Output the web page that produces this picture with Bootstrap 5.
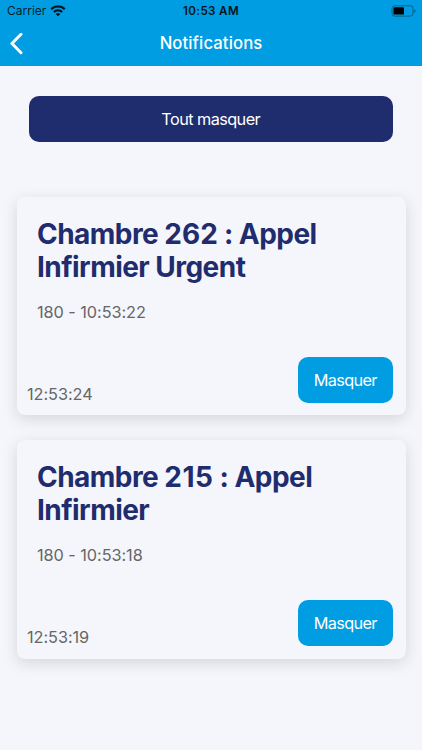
<!DOCTYPE html>
<html lang="fr">
<head>
<meta charset="utf-8">
<meta name="viewport" content="width=device-width, initial-scale=1">
<title>Notifications</title>
<link href="https://cdn.jsdelivr.net/npm/bootstrap@5.3.0/dist/css/bootstrap.min.css" rel="stylesheet">
<style>
body{font-family:Inter,"Liberation Sans",sans-serif;background:#f4f6fb;color:#666;min-height:750px;overflow:hidden}
.app-head{background:#009de2;height:65.5px}
.status{height:22px;font-size:12px;line-height:22px;color:#06202d;padding:0 6px 0 7px}
.status .clock{color:#03131c;font-size:11.6px;letter-spacing:.37px}
.title-bar{height:43px;padding:0 10px}
.title-bar h1{font-size:16.7px;line-height:43px;letter-spacing:.1px}
.hide-all{height:45.5px;margin:30.5px 29px 55px 28.5px;background:#1f2c6d;border-radius:10px;font-size:16.3px;letter-spacing:-.58px}
.notes{padding:0 16.5px;gap:24.5px}
.note{height:218.8px;background:#f4f6fb;border-radius:8px;box-shadow:0 4px 15px rgba(40,35,45,.15);padding:21px 12.5px 12.7px 10.5px}
.note h2{font-size:28px;line-height:33.5px;color:#1f2c6d;letter-spacing:-.54px;padding-left:10px}
.note h2 .room{letter-spacing:0}
.note h2 .room-narrow{letter-spacing:.5px}
.note p{font-size:16.3px;line-height:22px;letter-spacing:-.06px;padding-left:10px;margin-top:16px}
.note time{font-size:16.3px;line-height:18px;letter-spacing:-.06px}
.hide-one{width:95.5px;height:45.6px;background:#009de2;border-radius:10px;font-size:16.3px;letter-spacing:-.7px}
</style>
</head>
<body>
<header class="app-head">
  <div class="status d-flex justify-content-between align-items-center position-relative">
    <div class="d-flex align-items-center gap-1">
      <span>Carrier</span>
      <svg width="16" height="12" viewBox="0 0 16 12" fill="none" stroke="#03131c" stroke-width="2.3"><path d="M1.2 4.1C5 .5 11 .5 14.8 4.1M3.9 7c2.3-2.2 5.9-2.2 8.2 0"/><path d="M8 11.3 5.7 9c1.3-1.2 3.3-1.2 4.6 0z" fill="#03131c" stroke="none"/></svg>
    </div>
    <span class="clock fw-semibold position-absolute top-0 start-50 translate-middle-x text-nowrap">10:53 AM</span>
    <svg width="25" height="12" viewBox="0 0 25 12"><rect x="1" y=".8" width="21" height="10.3" rx="2.6" fill="none" stroke="#045f89"/><rect x="2.5" y="2.3" width="10.5" height="7.3" rx="1.2"/><path d="M23.3 4v4q1.3-.6 1.3-2t-1.3-2z" fill="#045f89"/></svg>
  </div>
  <div class="title-bar d-flex align-items-center position-relative">
    <svg width="13" height="22" viewBox="0 0 13 22" fill="none" stroke="#fff" stroke-width="3" stroke-linecap="round" stroke-linejoin="round"><path d="M11 1.3 1.9 10.5 11 19.7"/></svg>
    <h1 class="m-0 fw-medium text-white position-absolute top-0 start-50 translate-middle-x">Notifications</h1>
  </div>
</header>
<main class="d-flex flex-column">
  <button type="button" class="hide-all btn border-0 text-white p-0">Tout masquer</button>
  <div class="notes d-flex flex-column">
    <article class="note d-flex flex-column">
      <h2 class="m-0 fw-bold">Chambre <span class="room">262</span> : Appel<br>Infirmier Urgent</h2>
      <p class="mb-0">180 - 10:53:22</p>
      <div class="d-flex justify-content-between align-items-end mt-auto">
        <time>12:53:24</time>
        <button type="button" class="hide-one btn border-0 text-white p-0">Masquer</button>
      </div>
    </article>
    <article class="note d-flex flex-column">
      <h2 class="m-0 fw-bold">Chambre <span class="room-narrow">215</span> : Appel<br>Infirmier</h2>
      <p class="mb-0">180 - 10:53:18</p>
      <div class="d-flex justify-content-between align-items-end mt-auto">
        <time>12:53:19</time>
        <button type="button" class="hide-one btn border-0 text-white p-0">Masquer</button>
      </div>
    </article>
  </div>
</main>
<script src="https://cdn.jsdelivr.net/npm/bootstrap@5.3.0/dist/js/bootstrap.bundle.min.js"></script>
</body>
</html>
